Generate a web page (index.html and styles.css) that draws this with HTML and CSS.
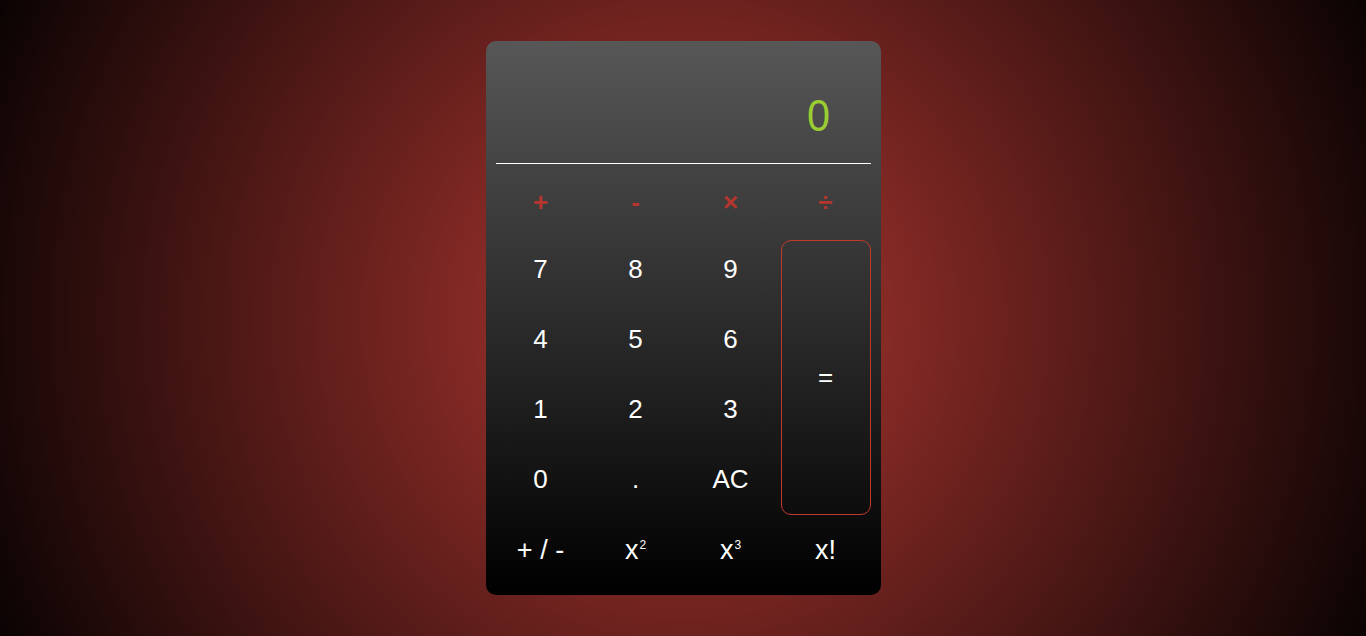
FILE: index.html
```html
<!DOCTYPE html>
<html lang="en">
<head>
<meta charset="utf-8">
<title>Calculator</title>
<link rel="stylesheet" href="styles.css">
</head>
<body>
<main class="page">
  <div class="calc">
    <div class="display"><span class="value">0</span></div>
    <div class="keys">
      <button class="key op">+</button>
      <button class="key op">-</button>
      <button class="key op">&times;</button>
      <button class="key op">&divide;</button>
      <button class="key">7</button>
      <button class="key">8</button>
      <button class="key">9</button>
      <button class="key equals">=</button>
      <button class="key">4</button>
      <button class="key">5</button>
      <button class="key">6</button>
      <button class="key">1</button>
      <button class="key">2</button>
      <button class="key">3</button>
      <button class="key">0</button>
      <button class="key">.</button>
      <button class="key">AC</button>
      <button class="key fn">+ / -</button>
      <button class="key fn"><span>x<sup>2</sup></span></button>
      <button class="key fn"><span>x<sup>3</sup></span></button>
      <button class="key fn">x!</button>
    </div>
  </div>
</main>
</body>
</html>
```

FILE: styles.css
```css
* { box-sizing: border-box; }
html, body { margin: 0; height: 100%; }
body {
  background: radial-gradient(circle at 50% 50%, #b33832 0%, #000 106%);
  font-family: "Liberation Sans", Arial, sans-serif;
  overflow: hidden;
}
.page {
  height: 636px;
  display: flex;
  justify-content: center;
  align-items: flex-start;
  padding-top: 41px;
}
.calc {
  width: 395px;
  height: 554px;
  border-radius: 10px;
  background: linear-gradient(to bottom, #575757 0%, #000 100%);
  padding: 0 10px 10px;
  display: flex;
  flex-direction: column;
}
.display {
  height: 123px;
  border-bottom: 1px solid #fff;
  display: flex;
  justify-content: flex-end;
  align-items: center;
  padding: 0 39px 0 0;
  margin-bottom: 6px;
}
.value {
  font-family: "Liberation Sans", Arial, sans-serif;
  font-size: 45px;
  color: #9acd32;
  line-height: 1;
  margin-top: 27px;
  transform: scaleX(0.92);
}
.keys {
  display: grid;
  grid-template-columns: repeat(4, 90px);
  grid-template-rows: repeat(6, 65px);
  gap: 5px;
}
.key {
  background: transparent;
  border: none;
  color: #fff;
  font-family: "Liberation Sans", Arial, sans-serif;
  font-size: 26px;
  padding: 0 0 6px;
  display: flex;
  align-items: center;
  justify-content: center;
}
.op {
  color: #b5352f;
  font-weight: bold;
  font-size: 26px;
  padding: 0;
}
.equals {
  grid-column: 4;
  grid-row: 2 / span 4;
  border: 1px solid #c0392b;
  border-radius: 10px;
  padding: 0;
}
.fn { font-size: 27px; padding-bottom: 4px; }
.fn sup {
  font-size: 12px;
  vertical-align: 10px;
  line-height: 0;
  margin-left: 1px;
}
```
